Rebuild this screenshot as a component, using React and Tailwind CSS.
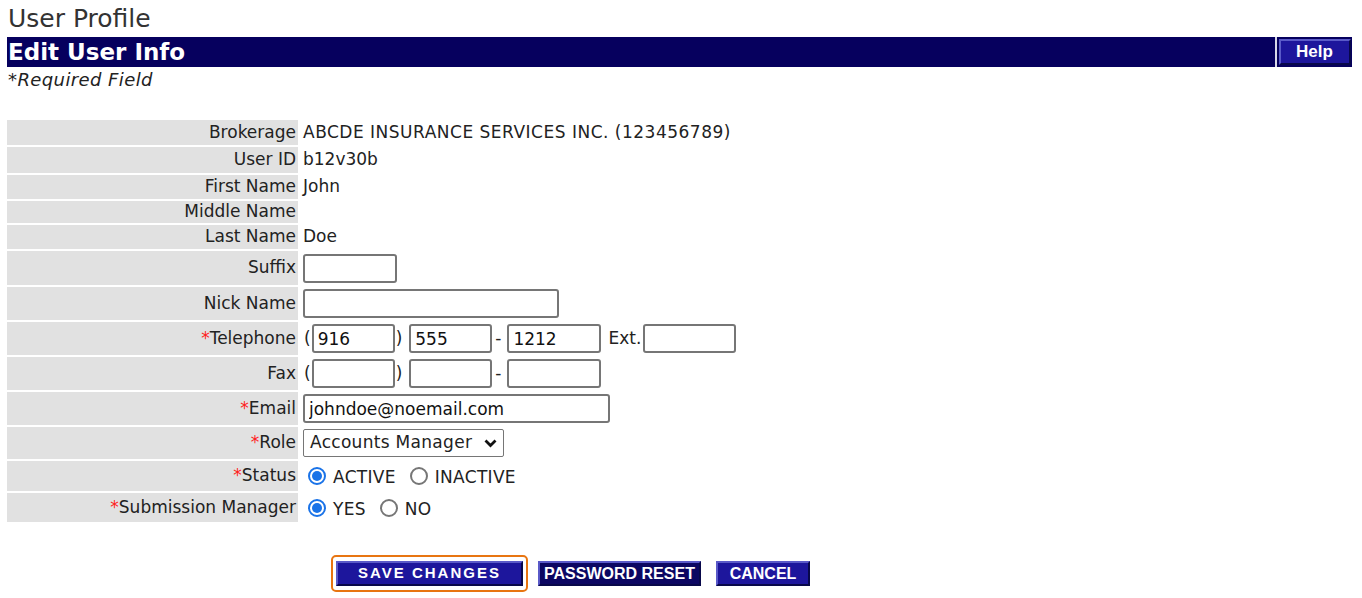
import React from 'react';

const Req = () => <span className="text-[#ff2020]">*</span>;

function Field({ w, value = '' }) {
  return (
    <input
      type="text"
      defaultValue={value}
      className={`${w} h-[29px] border-2 border-[#767676] rounded-[3px] px-[4px] text-[17px] text-[#111] bg-white outline-none`}
      style={{ fontFamily: '"DejaVu Sans", Verdana, sans-serif' }}
    />
  );
}

function Radio({ checked, label }) {
  return (
    <label className="flex items-center">
      <span
        className={`w-[18px] h-[18px] rounded-full flex items-center justify-center ${checked ? 'border-[2.5px] border-[#1a73e8]' : 'border-2 border-[#767676]'}`}
      >
        {checked && <span className="w-[10px] h-[10px] rounded-full bg-[#1a73e8]" />}
      </span>
      <span className="ml-[7px] mt-[4px] tracking-[0.3px]">{label}</span>
    </label>
  );
}

function Row({ h, label, required, children }) {
  return (
    <div className={`flex ${h}`}>
      <div className="w-[291px] bg-[#e1e1e1] flex items-center justify-end pr-[2px] text-[#222]">
        {required && <Req />}
        {label}
      </div>
      <div className="flex items-center pl-[5px] text-[#222]">{children}</div>
    </div>
  );
}

function NavyButton({ children, className = '' }) {
  return (
    <button
      className={`h-[25px] flex items-center justify-center text-white font-bold border-t-2 border-l-2 border-t-[#5a5ac8] border-l-[#5a5ac8] border-b-2 border-r-2 border-b-[#08084a] border-r-[#08084a] ${className}`}
      style={{ fontFamily: '"Liberation Sans", Arial, sans-serif' }}
    >
      {children}
    </button>
  );
}

export default function App() {
  return (
    <div
      className="w-[1362px] h-[598px] bg-white overflow-hidden text-[17px] text-[#222]"
      style={{ fontFamily: '"DejaVu Sans", Verdana, sans-serif' }}
    >
      <div className="pl-[8px] pt-[3px] h-[37px] text-[25px] leading-[31px] text-[#333]">User Profile</div>

      {/* Header bar */}
      <div className="ml-[7px] mr-[10px] h-[30px] bg-[#06005e] flex items-center">
        <div className="flex-1 pl-[1px] text-white font-bold text-[23px] leading-[30px]">
          Edit User Info
        </div>
        <div className="w-[2px] h-full bg-[#d8d8e8]" />
        <div className="w-[75px] h-full flex items-center justify-center">
          <NavyButton className="w-[72px] h-[26px] bg-[#1d169c] text-[17px]">Help</NavyButton>
        </div>
      </div>

      <div className="pl-[8px] pt-[2px] italic text-[18px] leading-[22px] tracking-[0.4px] text-[#222]">*Required Field</div>

      {/* Form table */}
      <div className="mt-[29px] ml-[7px] flex flex-col gap-[2px]">
        <Row h="h-[25px]" label="Brokerage">
          <span className="tracking-[0.5px]">ABCDE INSURANCE SERVICES INC. (123456789)</span>
        </Row>
        <Row h="h-[26px]" label="User ID">b12v30b</Row>
        <Row h="h-[24px]" label="First Name">John</Row>
        <Row h="h-[22px]" label="Middle Name"></Row>
        <Row h="h-[24px]" label="Last Name">Doe</Row>
        <Row h="h-[34px]" label="Suffix">
          <Field w="w-[94px]" />
        </Row>
        <Row h="h-[33px]" label="Nick Name">
          <Field w="w-[256px]" />
        </Row>
        <Row h="h-[33px]" label="Telephone" required>
          <span className="ml-[1px]">(</span>
          <span className="ml-[1px]"><Field w="w-[83px]" value="916" /></span>
          <span className="ml-[1px]">)</span>
          <span className="ml-[7px]"><Field w="w-[83px]" value="555" /></span>
          <span className="ml-[3px]">-</span>
          <span className="ml-[6px]"><Field w="w-[94px]" value="1212" /></span>
          <span className="ml-[7px]">Ext.</span>
          <span className="ml-[2px]"><Field w="w-[93px]" /></span>
        </Row>
        <Row h="h-[33px]" label="Fax">
          <span className="ml-[1px]">(</span>
          <span className="ml-[1px]"><Field w="w-[83px]" /></span>
          <span className="ml-[1px]">)</span>
          <span className="ml-[7px]"><Field w="w-[83px]" /></span>
          <span className="ml-[3px]">-</span>
          <span className="ml-[6px]"><Field w="w-[94px]" /></span>
        </Row>
        <Row h="h-[33px]" label="Email" required>
          <Field w="w-[307px]" value="johndoe@noemail.com" />
        </Row>
        <Row h="h-[32px]" label="Role" required>
          <div className="w-[201px] h-[28px] border border-[#767676] rounded-[2px] flex items-center justify-between pl-[6px] pr-[6px] bg-white">
            <span className="tracking-[0.3px]">Accounts Manager</span>
            <svg width="13" height="9" viewBox="0 0 13 9">
              <path d="M1.5 1.5 L6.5 6.5 L11.5 1.5" fill="none" stroke="#111" strokeWidth="2.8" />
            </svg>
          </div>
        </Row>
        <Row h="h-[30px]" label="Status" required>
          <div className="flex items-center gap-[14px] pl-[5px]">
            <Radio checked label="ACTIVE" />
            <Radio label="INACTIVE" />
          </div>
        </Row>
        <Row h="h-[29px]" label="Submission Manager" required>
          <div className="flex items-center gap-[14px] pl-[5px]">
            <Radio checked label="YES" />
            <Radio label="NO" />
          </div>
        </Row>
      </div>

      {/* Buttons */}
      <div className="mt-[33px] ml-[331px] flex items-center">
        <div className="w-[197px] h-[37px] border-2 border-[#e87511] rounded-[5px] flex items-center justify-center">
          <NavyButton className="w-[187px] bg-[#1d169c] text-[15px] tracking-[2px]">SAVE CHANGES</NavyButton>
        </div>
        <NavyButton className="ml-[10px] w-[163px] bg-[#0c0762] text-[16px]">PASSWORD RESET</NavyButton>
        <NavyButton className="ml-[15px] w-[94px] bg-[#1d169c] text-[16px]">CANCEL</NavyButton>
      </div>
    </div>
  );
}
